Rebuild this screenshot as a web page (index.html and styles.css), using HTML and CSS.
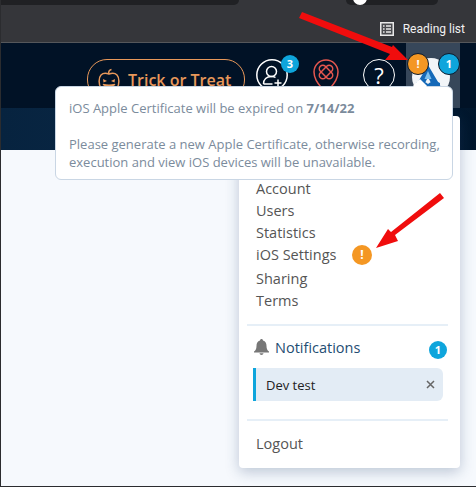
FILE: index.html
```html
<!DOCTYPE html>
<html lang="en">
<head>
  <meta charset="UTF-8" />
  <meta name="viewport" content="width=device-width, initial-scale=1" />
  <title>iOS Settings</title>
  <link rel="stylesheet" href="styles.css">
</head>
<body>
  <div class="chrome">
    <div class="tabs">
      <div class="tab-dark"></div>
      <div class="tab-pill"><span class="pill-dot"></span></div>
    </div>
    <div class="bookmarks">
      <svg class="list-icon" width="14" height="14" viewBox="0 0 14 14">
        <rect x="0.75" y="0.75" width="12.5" height="12.5" fill="#4a4b4f" stroke="#e8e8e8" stroke-width="1.5"/>
        <path d="M3 4h1.6M6 4h5M3 7h1.6M6 7h5M3 10h1.6M6 10h5" stroke="#e8e8e8" stroke-width="1.5"/>
      </svg>
      <span>Reading list</span>
    </div>
  </div>

  <header class="topbar">
    <button class="promo">
      <svg width="22" height="26" viewBox="0 0 22 26" fill="none" stroke="#e8985a" stroke-width="1.5">
        <path d="M11 7c-.8-2 0-4 2.500-4.500"/>
        <path d="M11 7C8 6 5 6 3 8 .5 10.500.5 18 3 21c2 2.500 5 2.500 8 2s6 .5 8-2c2.500-3 2.500-10.500 0-13-2-2-5-2-8-1z"/>
        <path d="M5 12l4 2-3.500 1.500zM17 12l-4 2 3.500 1.500z" fill="#e8985a" stroke="none"/>
        <path d="M5 17.500c3.500 2.500 8.500 2.500 12 0-3.500 1-8.500 1-12 0z" fill="#e8985a"/>
      </svg>
      Trick or Treat
    </button>
    <div class="icon-btn invite">
      <svg width="32" height="32" viewBox="0 0 32 32" fill="none" stroke="#fff" stroke-width="1.5">
        <circle cx="16" cy="16" r="15.200"/>
        <circle cx="15.500" cy="12.500" r="5"/>
        <path d="M7.500 25c0-4.500 3-7.500 8-7.500 1.500 0 3 .3 4 1M7.500 25h9M22 20.500v7M18.500 24h7"/>
      </svg>
      <span class="count">3</span>
    </div>
    <div class="icon-btn pin">
      <svg width="26" height="36" viewBox="0 0 26 36" fill="none" stroke="#e5574f" stroke-width="1.500">
        <path d="M13 35C8 27 1 22 1 13a12 12 0 0 1 24 0c0 9-7 14-12 22z"/>
        <rect x="9.500" y="5" width="7" height="16" rx="3.500" transform="rotate(45 13 13)"/>
        <rect x="9.500" y="5" width="7" height="16" rx="3.500" transform="rotate(-45 13 13)"/>
      </svg>
    </div>
    <div class="icon-btn help">?</div>
    <div class="account">
      <span class="avatar">
        <svg width="38" height="38" viewBox="0 0 38 38">
          <circle cx="19" cy="19" r="19" fill="#f2f5f8"/>
          <path d="M16 7L29 29H21L16 19 11 29H3z" fill="#1569b8"/>
          <path d="M16 13l3.500 8h-7z" fill="#7cc0ee"/>
          <path d="M4 25c4-2 8-2 12 1 4-3 8-3 12-1v6H4z" fill="#1569b8"/>
        </svg>
      </span>
      <span class="dot dot-warn">!</span>
      <span class="dot dot-info">1</span>
    </div>
  </header>
  <div class="subbar"></div>
  <main class="content"></main>

  <div class="tooltip">
    <p>iOS Apple Certificate will be expired on <b>7/14/22</b></p>
    <p>Please generate a new Apple Certificate, otherwise recording, execution and view iOS devices will be unavailable.</p>
  </div>

  <div class="menu">
    <ul class="menu-list">
      <li>Account</li>
      <li>Users</li>
      <li>Statistics</li>
      <li class="with-warn">iOS Settings <span class="warn">!</span></li>
      <li>Sharing</li>
      <li>Terms</li>
    </ul>
    <div class="notif">
      <div class="notif-head">
        <svg width="15" height="16" viewBox="0 0 15 16"><path d="M7.500 0C6.700 0 6 .7 6 1.500 3.500 2.200 2.500 4.300 2.500 7c0 3-1 4.500-2.500 5.500v1h15v-1C13.500 11.500 12.500 10 12.500 7c0-2.700-1-4.800-3.500-5.500C9 .7 8.300 0 7.500 0zM5.500 14.300c.2 1 1 1.700 2 1.700s1.800-.7 2-1.700z" fill="#777"/></svg>
        <span class="notif-title">Notifications</span>
        <span class="notif-count">1</span>
      </div>
      <div class="notif-item">
        <span>Dev test</span>
        <svg width="9" height="9" viewBox="0 0 9 9"><path d="M1 1l7 7M8 1L1 8" stroke="#666" stroke-width="1.500"/></svg>
      </div>
    </div>
    <div class="logout">Logout</div>
  </div>

  <svg class="arrows" width="476" height="487" viewBox="0 0 476 487">
    <path d="M299 18L302 12 392 47 393 45 408 60 385 60 390 54z" fill="#f00d0d"/>
    <path d="M440 193L444 198 395 235 398 241 376 248 388 229 391 232z" fill="#f00d0d"/>
  </svg>
</body>
</html>
```

FILE: styles.css
```css
html, body {
  height: 100%;
  margin: 0;
}

body {
  display: flex;
  flex-direction: column;
  position: relative;
  overflow: hidden;
  font-family: "Open Sans", sans-serif;
  background-color: #f6f9fd;
  border-left: 1px solid #2b2c2f;
  border-bottom: 1px solid #2b2c2f;
  box-sizing: border-box;
}

/* browser bar */
.chrome {
  height: 43px;
  flex: none;
  background-color: #35363a;
  border-bottom: 1px solid #55575b;
  box-sizing: border-box;
}

.tabs {
  display: flex;
  height: 5px;
}

.tab-dark {
  width: 238px;
  background-color: #202124;
  border-radius: 0 0 8px 0;
}

.tab-pill {
  width: 92px;
  margin-left: 107px;
  background-color: #202124;
  border-radius: 0 0 10px 10px;
  display: flex;
  justify-content: center;
  overflow: hidden;
}

.pill-dot {
  width: 14px;
  height: 14px;
  margin-top: -9px;
  margin-left: -64px;
  border-radius: 50%;
  background-color: #fff;
}

.bookmarks {
  display: flex;
  justify-content: flex-end;
  align-items: center;
  gap: 9px;
  height: 38px;
  padding: 10px 11px 0 0;
  box-sizing: border-box;
  color: #f1f1f1;
  font-family: Roboto, sans-serif;
  font-size: 12px;
}

/* app header */
.topbar {
  height: 65px;
  flex: none;
  display: flex;
  align-items: flex-start;
  padding-left: 86px;
  background-color: #011226;
  box-sizing: border-box;
}

.promo {
  width: 158px;
  height: 41px;
  margin-top: 16px;
  padding: 0 0 0 10px;
  display: flex;
  align-items: center;
  gap: 8px;
  background: none;
  border: 1px solid #e8985a;
  border-radius: 20px;
  color: #e8985a;
  font-family: inherit;
  font-size: 16px;
  font-weight: 600;
  box-sizing: border-box;
  white-space: nowrap;
}

.icon-btn {
  position: relative;
  margin-top: 16px;
}

.invite {
  width: 32px;
  margin-left: 11px;
}

.pin {
  width: 26px;
  margin-left: 25px;
}

.help {
  width: 32px;
  height: 32px;
  margin-left: 24px;
  border: 1.500px solid #fff;
  border-radius: 50%;
  box-sizing: border-box;
  color: #fff;
  font-size: 22px;
  line-height: 30px;
  text-align: center;
}

.count {
  position: absolute;
  top: -4px;
  right: -11px;
  width: 18px;
  height: 18px;
  border-radius: 50%;
  background-color: #0ea5dc;
  color: #fff;
  font-size: 11px;
  font-weight: 700;
  line-height: 18px;
  text-align: center;
}

.account {
  position: relative;
  width: 54px;
  height: 65px;
  margin-left: 11px;
  background-color: #37475a;
}

.avatar {
  position: absolute;
  left: 6px;
  top: 15px;
}

.dot {
  position: absolute;
  top: 10px;
  width: 20px;
  height: 20px;
  border: 1px solid #0b1a2c;
  border-radius: 50%;
  color: #fff;
  font-size: 11px;
  font-weight: 700;
  line-height: 20px;
  text-align: center;
}

.dot-warn {
  left: 1px;
  background-color: #f49723;
}

.dot-info {
  left: 32px;
  background-color: #0ea5dc;
}

.subbar {
  height: 42px;
  flex: none;
  background: linear-gradient(90deg, #07233f, #0a2b4a 60%, #01162c);
}

.content {
  flex: 1;
}

/* tooltip over header */
.tooltip {
  position: absolute;
  left: 54px;
  top: 86px;
  width: 398px;
  height: 94px;
  padding: 12px 10px 12px 13px;
  background-color: #fff;
  border: 1px solid #c9d6e4;
  border-radius: 6px;
  box-sizing: border-box;
  color: #7b8b9c;
  font-size: 13px;
  line-height: 18px;
  z-index: 2;
}

.tooltip::before {
  content: "";
  position: absolute;
  top: -6px;
  left: 359px;
  width: 10px;
  height: 10px;
  background-color: #fff;
  transform: rotate(45deg);
}

.tooltip p {
  margin: 0 0 18px;
}

.tooltip b {
  font-weight: 700;
}

/* account dropdown */
.menu {
  position: absolute;
  left: 238px;
  top: 116px;
  width: 221px;
  height: 352px;
  padding: 62px 12px 0 8px;
  background-color: #fff;
  border-radius: 4px;
  box-shadow: 0 4px 14px rgba(40, 70, 110, 0.28);
  box-sizing: border-box;
  z-index: 1;
}

.menu-list {
  list-style: none;
  margin: 0;
  padding: 0 0 12px 9px;
  border-bottom: 2px solid #e6eff7;
  color: #555;
  font-size: 14.500px;
  line-height: 22px;
}

.with-warn {
  position: relative;
  height: 24px;
}

.warn {
  position: absolute;
  left: 96px;
  top: 1px;
  width: 20px;
  height: 20px;
  border-radius: 50%;
  background-color: #f49723;
  color: #fff;
  font-size: 12px;
  font-weight: 700;
  line-height: 20px;
  text-align: center;
}

.notif {
  padding: 11px 5px 18px 6px;
  border-bottom: 2px solid #e6eff7;
}

.notif-head {
  display: flex;
  align-items: center;
  gap: 6px;
  height: 20px;
  padding-left: 1px;
  position: relative;
}

.notif-title {
  color: #1f4e73;
  font-size: 14.500px;
  font-weight: 500;
}

.notif-count {
  position: absolute;
  right: -4px;
  top: 4px;
  width: 18px;
  height: 18px;
  border-radius: 50%;
  background-color: #0ea5dc;
  color: #fff;
  font-size: 11px;
  font-weight: 700;
  line-height: 18px;
  text-align: center;
}

.notif-item {
  display: flex;
  justify-content: space-between;
  align-items: center;
  height: 33px;
  margin-top: 11px;
  padding: 0 8px 0 10px;
  background-color: #e3ecf5;
  border-left: 3px solid #0ea5dc;
  border-radius: 0 6px 6px 0;
  color: #222;
  font-size: 13px;
}

.logout {
  padding: 12px 0 0 9px;
  color: #555;
  font-size: 14.500px;
  line-height: 22px;
}

.arrows {
  position: absolute;
  left: -1px;
  top: 0;
  z-index: 3;
  pointer-events: none;
}
```
